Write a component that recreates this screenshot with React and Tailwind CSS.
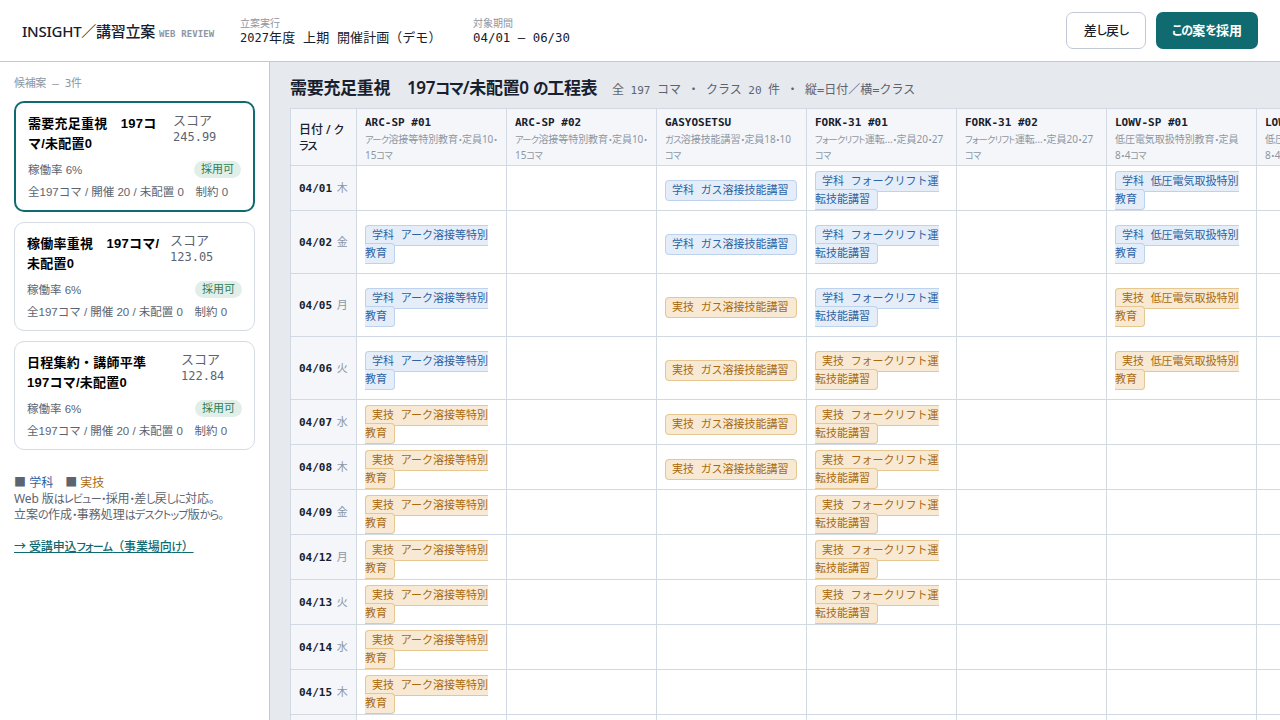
import React, { useState } from "react";

const plans = [
  { id: 1, title: ["需要充足重視　197コ", "マ/未配置0"], score: "245.99", titleWidth: "w-[145px]" },
  { id: 2, title: ["稼働率重視　197コマ/", "未配置0"], score: "123.05", titleWidth: "w-[143px]" },
  { id: 3, title: ["日程集約・講師平準", "197コマ/未配置0"], score: "122.84", titleWidth: "w-[154px]" },
];

const classes = [
  { code: "ARC-SP #01", info: ["アーク溶接等特別教育・定員10・", "15コマ"] },
  { code: "ARC-SP #02", info: ["アーク溶接等特別教育・定員10・", "15コマ"] },
  { code: "GASYOSETSU", info: ["ガス溶接技能講習・定員18・10", "コマ"] },
  { code: "FORK-31 #01", info: ["フォークリフト運転…・定員20・27", "コマ"] },
  { code: "FORK-31 #02", info: ["フォークリフト運転…・定員20・27", "コマ"] },
  { code: "LOWV-SP #01", info: ["低圧電気取扱特別教育・定員", "8・4コマ"] },
  { code: "LOWV-SP #02", info: ["低圧電気取扱特別教育・定員", "8・4コマ"] },
];

const courses = {
  arc: ["アーク溶接等特別", "教育"],
  gas: ["ガス溶接技能講習"],
  fork: ["フォークリフト運", "転技能講習"],
  low: ["低圧電気取扱特別", "教育"],
};

const G = "学科";
const J = "実技";

// cells: column index -> [kind, course]
const days = [
  { date: "04/01", day: "木", cells: { 2: [G, "gas"], 3: [G, "fork"], 5: [G, "low"] } },
  { date: "04/02", day: "金", tall: true, cells: { 0: [G, "arc"], 2: [G, "gas"], 3: [G, "fork"], 5: [G, "low"] } },
  { date: "04/05", day: "月", tall: true, cells: { 0: [G, "arc"], 2: [J, "gas"], 3: [G, "fork"], 5: [J, "low"] } },
  { date: "04/06", day: "火", tall: true, cells: { 0: [G, "arc"], 2: [J, "gas"], 3: [J, "fork"], 5: [J, "low"] } },
  { date: "04/07", day: "水", cells: { 0: [J, "arc"], 2: [J, "gas"], 3: [J, "fork"] } },
  { date: "04/08", day: "木", cells: { 0: [J, "arc"], 2: [J, "gas"], 3: [J, "fork"] } },
  { date: "04/09", day: "金", cells: { 0: [J, "arc"], 3: [J, "fork"] } },
  { date: "04/12", day: "月", cells: { 0: [J, "arc"], 3: [J, "fork"] } },
  { date: "04/13", day: "火", cells: { 0: [J, "arc"], 3: [J, "fork"] } },
  { date: "04/14", day: "水", cells: { 0: [J, "arc"] } },
  { date: "04/15", day: "木", cells: { 0: [J, "arc"] } },
  { date: "04/16", day: "金", cells: { 0: [J, "arc"] } },
];

const mono = "font-['DejaVu_Sans_Mono','Noto_Sans_CJK_JP',monospace]";
const ui = "font-['Noto_Sans','Noto_Sans_CJK_JP',sans-serif]";
const arial = "font-['Liberation_Sans','Noto_Sans_CJK_JP',sans-serif]";

// sets kana runs narrower than the kanji around them
const Kana = ({ children }) =>
  children.split(/([ぁ-ヿ。]+)/).map((part, i) =>
    i % 2 ? (
      <span key={i} className="text-[0.92em] leading-none tracking-[-0.07em] [font-feature-settings:'palt']">
        {part}
      </span>
    ) : (
      part
    )
  );

const Chip = ({ kind, course }) => {
  const lines = courses[course];
  const color =
    kind === G
      ? "bg-[#e5eef8] border-[#bdd2ec] text-[#2d62a3]"
      : "bg-[#f7e9d3] border-[#e5c78f] text-[#a9690f]";
  return (
    <span className={`rounded-[4px] border py-[3px] pr-[7px] pl-1.5 whitespace-nowrap ${color}`}>
      {kind} {lines[0]}
      {lines[1] && <br />}
      {lines[1]}
    </span>
  );
};

const PlanCard = ({ plan, active, onSelect }) => (
  <button
    onClick={onSelect}
    className={`flex w-full flex-col items-stretch justify-start rounded-[10px] bg-white px-3 pt-[11px] text-left ${arial} ${
      active ? "h-[111px] border-2 border-[#0f6b70]" : "h-[109px] border border-[#d5dae3]"
    }`}
  >
    <div className="flex h-[39px]">
      <div
        className={`shrink-0 text-[13px] leading-[19.5px] font-bold tracking-[0.25px] whitespace-nowrap text-black ${plan.titleWidth}`}
      >
        {plan.title[0]}
        <br />
        {plan.title[1]}
      </div>
      <div className={`-mt-px text-[12px] leading-4 text-[#5c6470] ${mono}`}>
        <div className="text-[13px]">スコア</div>
        {plan.score}
      </div>
    </div>
    <div className="mt-1.5 flex h-5 items-center justify-between text-[11.5px] text-[#5c6470]">
      <span className="pt-[3px]">稼働率 6%</span>
      <span className="h-[17px] rounded-full bg-[#e1efe8] px-[7px] text-[11px] leading-[16px] text-[#2e7d57]">採用可</span>
    </div>
    <div className="mt-1 text-[11.5px] leading-[18px] whitespace-nowrap text-[#5c6470]">
      全197コマ / 開催 20 / 未配置 0　制約 0
    </div>
  </button>
);

const App = () => {
  const [selected, setSelected] = useState(1);

  return (
    <div className={`flex h-[720px] w-[1280px] flex-col overflow-hidden bg-white text-[#17202c] ${ui}`}>
      {/* Header */}
      <header className="flex h-[62px] shrink-0 items-center border-b border-[#c3c9d4] px-[22px]">
        <div className="flex w-[218px] items-baseline pt-0.5 whitespace-nowrap">
          <span className="text-[15px] font-medium tracking-[-0.25px]">INSIGHT／講習立案</span>
          <span className={`ml-1 text-[9px] font-bold tracking-[0.1px] text-[#8d96a3] ${mono}`}>WEB REVIEW</span>
        </div>
        <div className="w-[233px] pt-px whitespace-nowrap">
          <div className="text-[10px] leading-[12px] text-[#8d96a3]">立案実行</div>
          <div className={`pt-px text-[13px] leading-4 tracking-[0.05px] ${mono}`}>
            <span className="text-[12px]">2027</span>年度 上期 開催計画（デモ）
          </div>
        </div>
        <div className="pt-px whitespace-nowrap">
          <div className="text-[10px] leading-[12px] text-[#8d96a3]">対象期間</div>
          <div className={`pt-px text-[12.4px] leading-4 ${mono}`}>04/01 – 06/30</div>
        </div>
        <div className="ml-auto flex gap-2.5 text-[13px] whitespace-nowrap">
          <button className="h-[37px] w-20 rounded-[7px] border border-[#c3c9d4] font-medium">
            <Kana>差し戻し</Kana>
          </button>
          <button className="h-[37px] w-[102px] rounded-[7px] bg-[#0f6b70] font-bold text-white">
            <Kana>この案を採用</Kana>
          </button>
        </div>
      </header>

      <div className="flex min-h-0 flex-1">
        {/* Sidebar */}
        <aside className="w-[270px] shrink-0 border-r border-[#c3c9d4] px-3.5 pt-3.5">
          <div className={`h-[25px] text-[11px] leading-4 tracking-[-0.35px] text-[#8d96a3] ${mono}`}>候補案 — 3件</div>
          <div className="flex flex-col gap-2.5">
            {plans.map((plan) => (
              <PlanCard key={plan.id} plan={plan} active={plan.id === selected} onSelect={() => setSelected(plan.id)} />
            ))}
          </div>
          <div className="mt-[25px] text-[12px] leading-4 whitespace-nowrap text-[#5c6470]">
            <div>
              ■ <span className="text-[#2d62a3]">学科</span>　■ <span className="text-[#a9690f]">実技</span>
            </div>
            <div className="tracking-[-0.1px]">
              <Kana>Web 版はレビュー・採用・差し戻しに対応。</Kana>
            </div>
            <div>
              <Kana>立案の作成・事務処理はデスクトップ版から。</Kana>
            </div>
            <a href="#" className="mt-4 block w-max font-medium tracking-[-0.1px] text-[#0f6b70] underline">
              <Kana>→ 受講申込フォーム（事業場向け）</Kana>
            </a>
          </div>
        </aside>

        {/* Schedule */}
        <main className="min-w-0 flex-1 overflow-hidden bg-[#e6e9ee] pl-5">
          <div className="flex h-[46px] items-baseline pt-3.5 whitespace-nowrap">
            <h1 className="w-[322px] text-[17px] leading-6 font-semibold tracking-[-0.3px]">
              <Kana>需要充足重視　197コマ/未配置0 の工程表</Kana>
            </h1>
            <span className={`text-[12px] text-[#5c6470] [word-spacing:-0.7px] ${mono}`}>
              全 <span className="text-[11px]">197</span> コマ ・ クラス <span className="text-[11px]">20</span> 件 ・
              縦=日付／横=クラス
            </span>
          </div>
          <table className="w-[1117px] table-fixed border-collapse bg-white">
            <thead>
              <tr className="h-[57px] bg-[#f4f6fa] text-left">
                <th className="w-[66px] border border-[#d3d9e2] px-2 pt-0.5 text-[12px] leading-4 font-medium whitespace-nowrap">
                  <Kana>日付 / ク</Kana>
                  <br />
                  <Kana>ラス</Kana>
                </th>
                {classes.map((c) => (
                  <th key={c.code} className="w-[150px] border border-[#d3d9e2] px-2 pt-[3px] font-normal whitespace-nowrap">
                    <div className={`text-[11px] leading-4 font-bold ${mono}`}>{c.code}</div>
                    <div className="text-[10px] leading-4 tracking-[-0.05px] text-[#8d96a3]">
                      <Kana>{c.info[0]}</Kana>
                      <br />
                      <Kana>{c.info[1]}</Kana>
                    </div>
                  </th>
                ))}
              </tr>
            </thead>
            <tbody>
              {days.map((d) => (
                <tr key={d.date} className={d.tall ? "h-[63px]" : "h-[45px]"}>
                  <td className={`border border-[#d3d9e2] bg-[#f4f6fa] px-2 pt-0.5 text-[11px] whitespace-nowrap ${mono}`}>
                    <b>{d.date}</b> <span className="-ml-0.5 text-[#8d96a3]">{d.day}</span>
                  </td>
                  {classes.map((c, i) => (
                    <td key={c.code} className={`border border-[#d3d9e2] px-2 pt-1.5 text-[11px] leading-[18px] ${mono}`}>
                      {d.cells[i] && <Chip kind={d.cells[i][0]} course={d.cells[i][1]} />}
                    </td>
                  ))}
                </tr>
              ))}
            </tbody>
          </table>
        </main>
      </div>
    </div>
  );
};

export default App;
